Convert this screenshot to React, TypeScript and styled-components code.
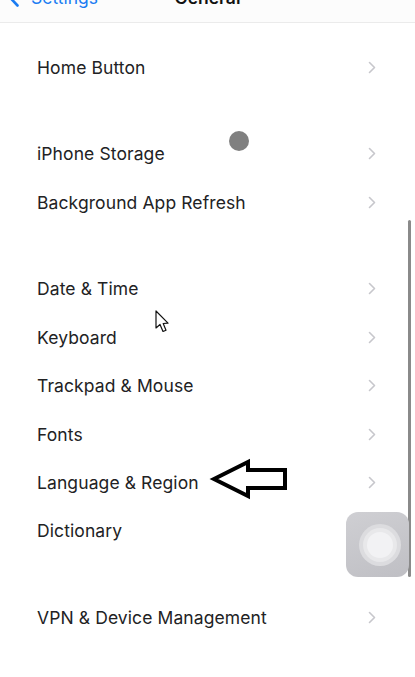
import styled, { createGlobalStyle } from "styled-components";

const GlobalStyle = createGlobalStyle`
  html, body {
    margin: 0;
    padding: 0;
    background: #ffffff;
  }
  body {
    font-family: Inter, "Noto Sans", "Liberation Sans", sans-serif;
    -webkit-font-smoothing: antialiased;
  }
`;

const Screen = styled.div`
  position: relative;
  width: 415px;
  height: 677px;
  overflow: hidden;
  background: #ffffff;
`;

const NavBar = styled.div`
  position: relative;
  height: 23px;
  overflow: hidden;
  background: #fcfcfc;
  border-bottom: 1px solid #ebebeb;
  box-sizing: border-box;
`;

const NavInner = styled.div`
  position: absolute;
  left: 0;
  right: 0;
  bottom: 14px;
  display: flex;
  align-items: center;
  justify-content: center;
  height: 22px;
`;

const BackLink = styled.div`
  position: absolute;
  left: 8px;
  display: flex;
  align-items: center;
  gap: 12px;
  color: #1a7cf2;
  font-size: 17.5px;
`;

const NavTitle = styled.div`
  font-size: 17.5px;
  font-weight: 600;
  color: #111111;
`;

const List = styled.div`
  display: flex;
  flex-direction: column;
  gap: 38.3px;
  padding-top: 20px;
`;

const Group = styled.div`
  display: flex;
  flex-direction: column;
`;

const Row = styled.div`
  display: flex;
  align-items: center;
  justify-content: space-between;
  height: 48.4px;
  padding: 0 39px 0 37px;
`;

const Label = styled.span`
  font-size: 17.5px;
  color: #222224;
  letter-spacing: 0.1px;
`;

const Dot = styled.div`
  position: absolute;
  left: 229px;
  top: 131px;
  width: 20px;
  height: 20px;
  border-radius: 50%;
  background: #808080;
`;

const ScrollBar = styled.div`
  position: absolute;
  left: 408px;
  top: 220px;
  width: 2.5px;
  height: 357px;
  border-radius: 2px;
  background: #8a8a8a;
`;

const Overlay = styled.svg`
  position: absolute;
  overflow: visible;
`;

const Assistive = styled.div`
  position: absolute;
  left: 346px;
  top: 512px;
  width: 63px;
  height: 65px;
  border-radius: 12px;
  background: linear-gradient(160deg, #cfcfd3, #bfbfc4);
  display: flex;
  align-items: center;
  justify-content: center;
  padding-left: 4px;
  box-sizing: border-box;
`;

const Ring = styled.div<{ size: number; tone: string }>`
  width: ${(p) => p.size}px;
  height: ${(p) => p.size}px;
  border-radius: 50%;
  background: ${(p) => p.tone};
  display: flex;
  align-items: center;
  justify-content: center;
`;

const groups = [
  ["Home Button"],
  ["iPhone Storage", "Background App Refresh"],
  [
    "Date & Time",
    "Keyboard",
    "Trackpad & Mouse",
    "Fonts",
    "Language & Region",
    "Dictionary",
  ],
  ["VPN & Device Management"],
];

function Chevron() {
  return (
    <svg width="8" height="13" viewBox="0 0 8 13">
      <polyline
        points="1.5,1.5 6.5,6.5 1.5,11.5"
        fill="none"
        stroke="#c7c7cc"
        strokeWidth="1.6"
        strokeLinecap="round"
        strokeLinejoin="round"
      />
    </svg>
  );
}

export default function App() {
  return (
    <Screen>
      <GlobalStyle />
      <NavBar>
        <NavInner>
          <BackLink>
            <svg width="11" height="20" viewBox="0 0 11 20">
              <polyline
                points="9.5,1.5 1.5,10 9.5,18.5"
                fill="none"
                stroke="#1a7cf2"
                strokeWidth="2.6"
                strokeLinecap="round"
                strokeLinejoin="round"
              />
            </svg>
            <span>Settings</span>
          </BackLink>
          <NavTitle>General</NavTitle>
        </NavInner>
      </NavBar>

      <List>
        {groups.map((g, i) => (
          <Group key={i}>
            {g.map((label) => (
              <Row key={label}>
                <Label>{label}</Label>
                <Chevron />
              </Row>
            ))}
          </Group>
        ))}
      </List>

      <Dot />
      <ScrollBar />

      {/* mouse pointer */}
      <Overlay width="14" height="24" viewBox="0 0 14 24" style={{ left: 155, top: 310 }}>
        <path
          d="M1 1 L1 18 L5 14.5 L8 21.5 L11 20.2 L8.2 13.5 L13 13.2 Z"
          fill="#ffffff"
          stroke="#111111"
          strokeWidth="1.2"
          strokeLinejoin="round"
        />
      </Overlay>

      {/* annotation arrow */}
      <Overlay width="76" height="40" viewBox="0 0 76 40" style={{ left: 212, top: 460 }}>
        <path
          d="M2 19 L36 2 L36 10 L73 10 L73 28 L36 28 L36 36 Z"
          fill="#ffffff"
          stroke="#000000"
          strokeWidth="4"
          strokeLinejoin="miter"
        />
      </Overlay>

      <Assistive>
        <Ring size={42} tone="#dcdcdf">
          <Ring size={34} tone="#e8e8ea">
            <Ring size={26} tone="#f2f2f4" />
          </Ring>
        </Ring>
      </Assistive>
    </Screen>
  );
}
